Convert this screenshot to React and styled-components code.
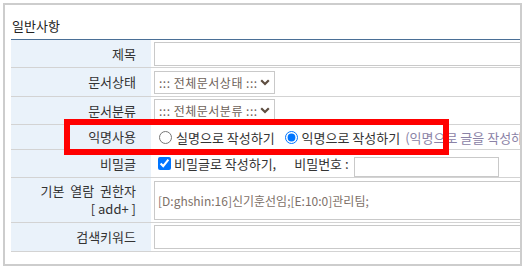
import React from "react";
import styled, { createGlobalStyle } from "styled-components";

const GlobalStyle = createGlobalStyle`
  html, body {
    margin: 0;
    padding: 0;
    background: #fff;
  }
  body {
    font-family: "Noto Sans CJK KR", "Noto Sans", sans-serif;
    font-size: 13px;
    color: #333;
  }
`;

const Panel = styled.div`
  position: relative;
  box-sizing: border-box;
  margin: 3px 0 0 3px;
  width: 519px;
  height: 263px;
  border: 2px solid #cdcdcd;
  padding-left: 6px;
  overflow: hidden;
  background: #fff;
`;

const Title = styled.div`
  padding: 13px 0 5px 1px;
  line-height: 16px;
  color: #222;
`;

const FormTable = styled.table`
  border-collapse: collapse;
  table-layout: fixed;
  width: 620px;
  border-top: 1px solid #4a6f96;
`;

const LabelCol = styled.col`
  width: 140px;
`;

const Row = styled.tr`
  height: ${(p) => p.$h}px;
`;

const Label = styled.th`
  padding: 0 15px 0 0;
  background: #eaf2fa;
  text-align: right;
  font-weight: normal;
  color: #333;
  line-height: 18px;
  vertical-align: middle;
  white-space: nowrap;
  border-bottom: 1px solid #d3d3d3;
  word-spacing: ${(p) => (p.$wide ? "3px" : "0")};
`;

const AddLink = styled.span`
  word-spacing: 0;
`;

const Value = styled.td`
  padding: 0 0 0 3px;
  vertical-align: middle;
  border-bottom: 1px solid #d3d3d3;
  white-space: nowrap;
`;

const TextBox = styled.div`
  box-sizing: border-box;
  width: ${(p) => p.$w}px;
  height: ${(p) => p.$h}px;
  border: 1px solid #c9c9c9;
  padding-left: 3px;
  display: flex;
  align-items: center;
  font-size: 12px;
  color: #7d7068;
  background: #fff;
  margin-top: ${(p) => p.$mt || 0}px;
`;

const SelectBox = styled.div`
  box-sizing: border-box;
  width: 121px;
  height: 23px;
  border: 1px solid #c9c9c9;
  padding: 0 4px;
  display: flex;
  align-items: center;
  justify-content: space-between;
  font-size: 12px;
  letter-spacing: 0.5px;
  color: #6e6259;
`;

const Options = styled.div`
  display: flex;
  align-items: center;
  white-space: nowrap;
  color: #333;
`;

const Radio = styled.input.attrs({ type: "radio" })`
  width: 13px;
  height: 13px;
  margin: 0 4px 0 5px;
`;

const Check = styled.input.attrs({ type: "checkbox" })`
  width: 13px;
  height: 13px;
  margin: 0 3px 0 4px;
`;

const Note = styled.span`
  margin-left: 5px;
  color: #8a82a6;
`;

const Gap = styled.span`
  margin-left: ${(p) => p.$w}px;
`;

const Highlight = styled.div`
  position: absolute;
  left: 59px;
  top: 114px;
  width: 385px;
  height: 36px;
  box-sizing: border-box;
  border: 6px solid #ff0000;
  pointer-events: none;
`;

const Chevron = () => (
  <svg width="10" height="7" viewBox="0 0 10 7">
    <path d="M1.2 1.2 L5 5 L8.8 1.2" fill="none" stroke="#5e4e40" strokeWidth="2.2" />
  </svg>
);

export default function App() {
  return (
    <>
      <GlobalStyle />
      <Panel>
        <Title>일반사항</Title>
        <FormTable>
          <colgroup>
            <LabelCol />
            <col />
          </colgroup>
          <tbody>
            <Row $h={28}>
              <Label>제목</Label>
              <Value>
                <TextBox $w={430} $h={24} />
              </Value>
            </Row>
            <Row $h={29}>
              <Label>문서상태</Label>
              <Value>
                <SelectBox>
                  <span>::: 전체문서상태 :::</span>
                  <Chevron />
                </SelectBox>
              </Value>
            </Row>
            <Row $h={28}>
              <Label>문서분류</Label>
              <Value>
                <SelectBox>
                  <span>::: 전체문서분류 :::</span>
                  <Chevron />
                </SelectBox>
              </Value>
            </Row>
            <Row $h={25}>
              <Label>익명사용</Label>
              <Value>
                <Options>
                  <Radio name="anon" />
                  <span>실명으로 작성하기</span>
                  <Gap $w={5} />
                  <Radio name="anon" defaultChecked />
                  <span>익명으로 작성하기</span>
                  <Note>(익명으로 글을 작성하면 작성자 정보가 표시되지 않습니다)</Note>
                </Options>
              </Value>
            </Row>
            <Row $h={28}>
              <Label>비밀글</Label>
              <Value>
                <Options>
                  <Check defaultChecked />
                  <span>비밀글로 작성하기,</span>
                  <Gap $w={18} />
                  <span>비밀번호 :</span>
                  <Gap $w={5} />
                  <TextBox $w={145} $h={20} $mt={6} />
                </Options>
              </Value>
            </Row>
            <Row $h={45}>
              <Label $wide>
                기본 열람 권한자
                <br />
                <AddLink>[ add+ ]</AddLink>
              </Label>
              <Value>
                <TextBox $w={430} $h={39}>
                  [D:ghshin:16]신기훈선임;[E:10:0]관리팀;
                </TextBox>
              </Value>
            </Row>
            <Row $h={29}>
              <Label>검색키워드</Label>
              <Value>
                <TextBox $w={430} $h={24} />
              </Value>
            </Row>
          </tbody>
        </FormTable>
        <Highlight />
      </Panel>
    </>
  );
}
